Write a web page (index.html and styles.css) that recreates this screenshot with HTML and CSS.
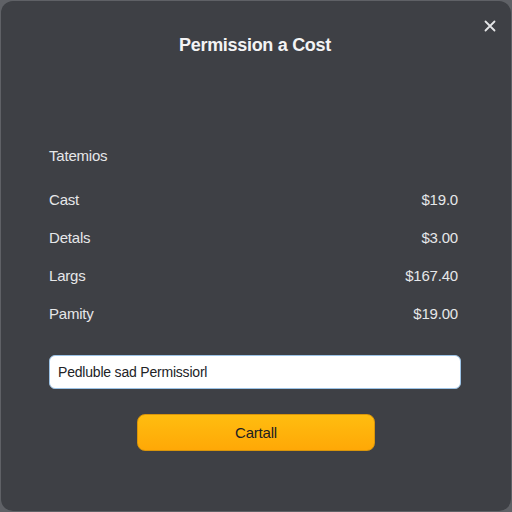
FILE: index.html
```html
<!DOCTYPE html>
<html lang="en">
<head>
    <meta charset="UTF-8">
    <meta name="viewport" content="width=device-width, initial-scale=1.0">
    <title>Permission a Cost</title>
    <link rel="stylesheet" href="styles.css">
</head>
<body>
    <div class="dialog">
        <button class="close" aria-label="Close">
            <svg width="12" height="12" viewBox="0 0 12 12">
                <path d="M1.5 1.5L10.5 10.5M10.5 1.5L1.5 10.5" stroke="#e4e5e7" stroke-width="1.8" stroke-linecap="round"/>
            </svg>
        </button>

        <h1 class="title">Permission a Cost</h1>

        <div class="section-label">Tatemios</div>

        <div class="rows">
            <div class="row"><span>Cast</span><span>$19.0</span></div>
            <div class="row"><span>Detals</span><span>$3.00</span></div>
            <div class="row"><span>Largs</span><span>$167.40</span></div>
            <div class="row"><span>Pamity</span><span>$19.00</span></div>
        </div>

        <input class="field" type="text" value="Pedluble sad Permissiorl">

        <div class="actions">
            <button class="primary">Cartall</button>
        </div>
    </div>
</body>
</html>
```

FILE: styles.css
```css
body {
    margin: 0;
    background: #5f6166;
    font-family: "Liberation Sans", Arial, sans-serif;
}
.dialog {
    position: relative;
    box-sizing: border-box;
    margin: 1px;
    height: 510px;
    padding: 30px 50px 0 48px;
    background: #3e4045;
    border-radius: 12px;
    color: #e6e7e9;
}
.close {
    position: absolute;
    top: 19px;
    right: 15px;
    padding: 0;
    border: none;
    background: none;
    line-height: 0;
}
.title {
    margin: 0;
    height: 28px;
    line-height: 28px;
    text-align: center;
    font-size: 18px;
    font-weight: bold;
    color: #f3f3f4;
    letter-spacing: -0.3px;
}
.section-label {
    margin-top: 87px;
    line-height: 20px;
    font-size: 15px;
    letter-spacing: -0.2px;
}
.rows {
    margin-top: 14px;
    padding-right: 3px;
}
.row {
    display: flex;
    justify-content: space-between;
    align-items: center;
    height: 38px;
    font-size: 15px;
    letter-spacing: -0.2px;
}
.field {
    display: block;
    box-sizing: border-box;
    width: 100%;
    height: 34px;
    margin-top: 23px;
    padding: 0 8px;
    border: 1px solid #9cc3e6;
    border-radius: 6px;
    background: #ffffff;
    font-family: inherit;
    font-size: 14px;
    color: #222326;
    letter-spacing: -0.2px;
}
.actions {
    display: flex;
    justify-content: center;
    margin-top: 25px;
}
.primary {
    width: 238px;
    height: 37px;
    margin-left: 2px;
    border: 1px solid #d9950a;
    border-radius: 8px;
    background: linear-gradient(180deg, #ffbd10 0%, #ffa806 100%);
    font-family: inherit;
    font-size: 15px;
    color: #202022;
    letter-spacing: -0.2px;
}
```
